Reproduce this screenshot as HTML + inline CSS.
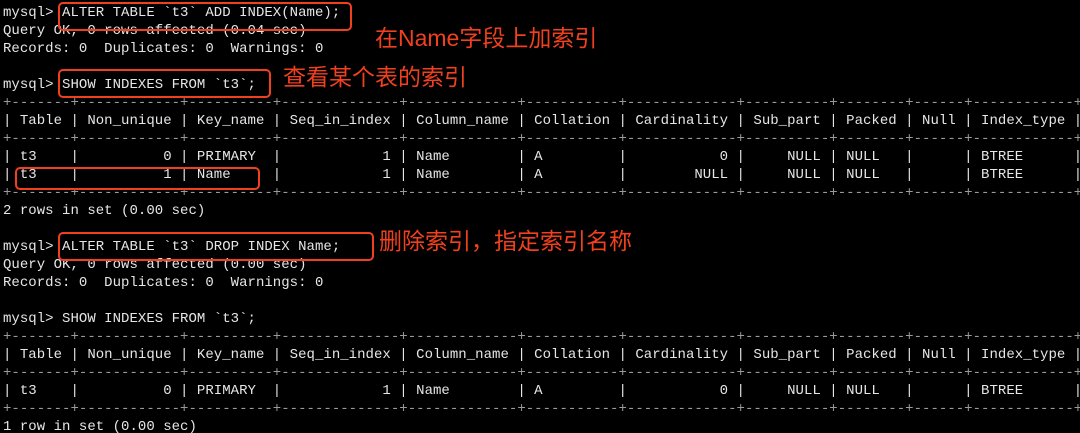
<!DOCTYPE html>
<html><head><meta charset="utf-8"><style>
html,body{margin:0;padding:0;background:#000;width:1080px;height:433px;overflow:hidden;position:relative}
#w{position:absolute;left:0;top:0;width:1080px;height:433px;overflow:hidden}
pre{margin:0;position:absolute;left:3px;top:4px;font-family:"Liberation Mono",monospace;font-size:14px;line-height:18px;color:#e6e6e6;letter-spacing:0.03px;white-space:pre}
.b{color:#9a9a9a}
.box{position:absolute;border:2px solid #f0401e;border-radius:5px;box-sizing:border-box}
.ann{position:absolute;color:#f0401e;font-family:"Liberation Sans","Noto Sans CJK SC",sans-serif;font-size:23px;line-height:26px;white-space:nowrap}
</style></head><body><div id="w">
<pre>mysql&gt; ALTER TABLE `t3` ADD INDEX(Name);
Query OK, 0 rows affected (0.04 sec)
Records: 0  Duplicates: 0  Warnings: 0

mysql&gt; SHOW INDEXES FROM `t3`;
<span class="b">+-------+------------+----------+--------------+-------------+-----------+-------------+----------+--------+------+------------+</span>
| Table | Non_unique | Key_name | Seq_in_index | Column_name | Collation | Cardinality | Sub_part | Packed | Null | Index_type |
<span class="b">+-------+------------+----------+--------------+-------------+-----------+-------------+----------+--------+------+------------+</span>
| t3    |          0 | PRIMARY  |            1 | Name        | A         |           0 |     NULL | NULL   |      | BTREE      |
| t3    |          1 | Name     |            1 | Name        | A         |        NULL |     NULL | NULL   |      | BTREE      |
<span class="b">+-------+------------+----------+--------------+-------------+-----------+-------------+----------+--------+------+------------+</span>
2 rows in set (0.00 sec)

mysql&gt; ALTER TABLE `t3` DROP INDEX Name;
Query OK, 0 rows affected (0.00 sec)
Records: 0  Duplicates: 0  Warnings: 0

mysql&gt; SHOW INDEXES FROM `t3`;
<span class="b">+-------+------------+----------+--------------+-------------+-----------+-------------+----------+--------+------+------------+</span>
| Table | Non_unique | Key_name | Seq_in_index | Column_name | Collation | Cardinality | Sub_part | Packed | Null | Index_type |
<span class="b">+-------+------------+----------+--------------+-------------+-----------+-------------+----------+--------+------+------------+</span>
| t3    |          0 | PRIMARY  |            1 | Name        | A         |           0 |     NULL | NULL   |      | BTREE      |
<span class="b">+-------+------------+----------+--------------+-------------+-----------+-------------+----------+--------+------+------------+</span>
1 row in set (0.00 sec)</pre>
<div class="box" style="left:58px;top:2px;width:294px;height:29px"></div>
<div class="box" style="left:58px;top:69px;width:213px;height:29px"></div>
<div class="box" style="left:15px;top:167px;width:245px;height:23px"></div>
<div class="box" style="left:58px;top:232px;width:316px;height:29px"></div>
<div class="ann" style="left:375px;top:25px">在Name字段上加索引</div>
<div class="ann" style="left:283px;top:64px">查看某个表的索引</div>
<div class="ann" style="left:379px;top:228px">删除索引，指定索引名称</div>
</div></body></html>
